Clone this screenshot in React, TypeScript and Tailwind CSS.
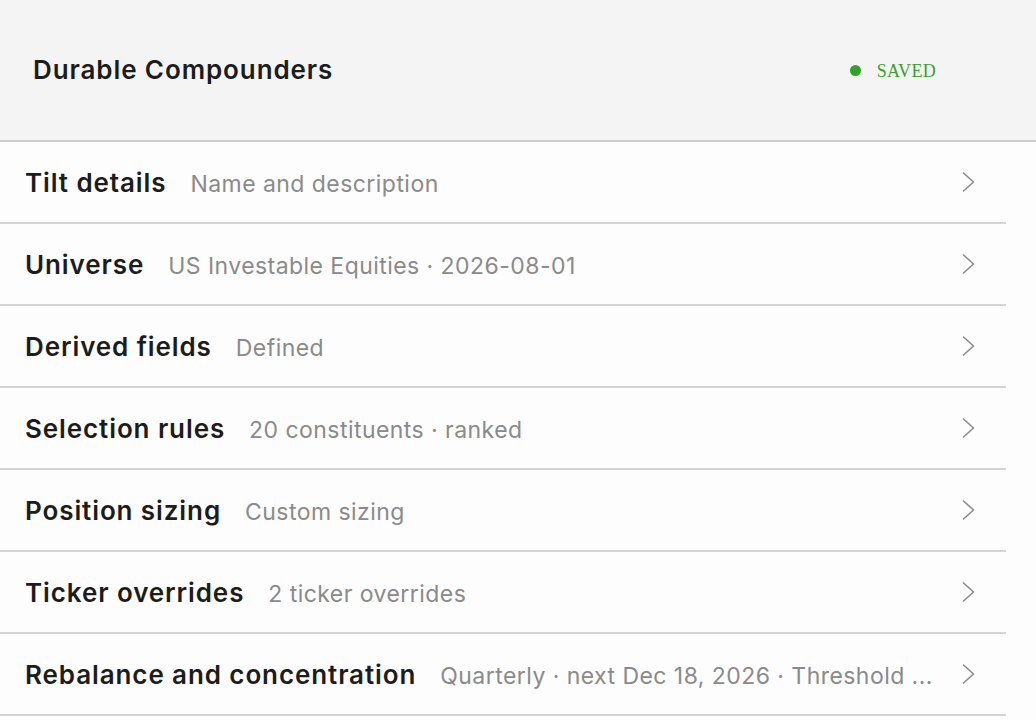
interface Step {
  title: string;
  summary: string;
}

const steps: Step[] = [
  { title: "Tilt details", summary: "Name and description" },
  { title: "Universe", summary: "US Investable Equities · 2026-08-01" },
  { title: "Derived fields", summary: "Defined" },
  { title: "Selection rules", summary: "20 constituents · ranked" },
  { title: "Position sizing", summary: "Custom sizing" },
  { title: "Ticker overrides", summary: "2 ticker overrides" },
  { title: "Rebalance and concentration", summary: "Quarterly · next Dec 18, 2026 · Threshold ..." },
];

const Chevron = () => (
  <svg width="13" height="22" viewBox="0 0 13 22" fill="none" className="shrink-0">
    <polyline
      points="1.5,2 11.5,11 1.5,20"
      stroke="#8a8a8a"
      strokeWidth="1.6"
      strokeLinecap="round"
      strokeLinejoin="round"
    />
  </svg>
);

export default function App() {
  return (
    <div className="min-h-screen w-[1036px] bg-[#fdfdfd] font-['Inter',sans-serif] text-[#1c1c1c]">
      <header className="flex h-[142px] items-center justify-between border-b-2 border-[#cdcdcd] bg-[#f4f4f4] pl-[33px] pr-[100px]">
        <h1 className="-mt-[1px] text-[26px] font-semibold tracking-[0.9px]">Durable Compounders</h1>
        <div className="flex items-center gap-[16px]">
          <span className="h-[11px] w-[11px] rounded-full bg-[#32a02a]" />
          <span className="mt-[3px] font-['Liberation_Serif',serif] text-[18px] font-medium tracking-[0.3px] text-[#3aa02e]">
            SAVED
          </span>
        </div>
      </header>
      <ul className="w-[1006px]">
        {steps.map((step) => (
          <li
            key={step.title}
            className="flex h-[82px] items-center border-b-2 border-[#d4d4d4] pl-[25px] pr-[31px]"
          >
            <div className="flex min-w-0 flex-1 items-baseline">
              <span className="shrink-0 text-[26px] font-semibold tracking-[0.9px]">{step.title}</span>
              <span className="ml-[24px] min-w-0 flex-1 truncate text-[23px] tracking-[0.45px] text-[#8a8a8a]">
                {step.summary}
              </span>
            </div>
            <span className="ml-[24px]">
              <Chevron />
            </span>
          </li>
        ))}
      </ul>
    </div>
  );
}
